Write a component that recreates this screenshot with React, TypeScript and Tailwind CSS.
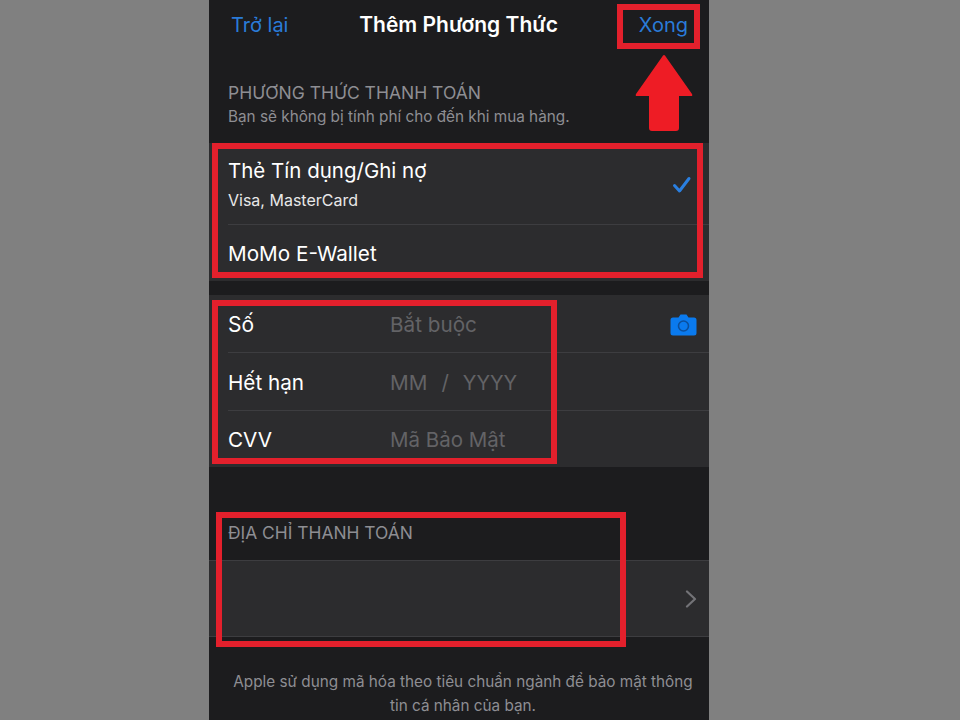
export default function App() {
  return (
    <main className="h-[720px] overflow-hidden bg-[#808080] pl-[209px] font-['Inter','Noto_Sans',sans-serif]">
      <div className="relative h-full w-[500px] bg-[#1c1c1e] flex flex-col">
        {/* Nav bar */}
        <header className="h-[50px] shrink-0 flex items-center justify-between pl-[22px] pr-[21px]">
          <span className="text-[20px] text-[#2a7bd8]">Trở lại</span>
          <h1 className="mr-[10px] text-[21px] font-semibold text-white">Thêm Phương Thức</h1>
          <span className="text-[20px] text-[#2a7bd8]">Xong</span>
        </header>

        {/* Section header */}
        <div className="h-[93px] shrink-0 pl-[19px] pt-[32px]">
          <div className="text-[17.5px] leading-[22px] text-[#8e8e93]">PHƯƠNG THỨC THANH TOÁN</div>
          <div className="text-[15.3px] leading-[20px] mt-[3px] text-[#8e8e93]">Bạn sẽ không bị tính phí cho đến khi mua hàng.</div>
        </div>

        {/* Payment type */}
        <section className="shrink-0 bg-[#2c2c2e] pl-[19px]">
          <div className="h-[82px] flex items-center justify-between pr-[17px] border-b border-[#3d3d40] pt-[1px]">
            <div>
              <div className="text-[20.5px] leading-[30px] text-white">Thẻ Tín dụng/Ghi nợ</div>
              <div className="text-[16px] leading-[24px] mt-[2px] text-[#e8e8e8]">Visa, MasterCard</div>
            </div>
            <svg width="20" height="18" viewBox="0 0 20 18" fill="none" className="mt-[1px]">
              <path d="M2.5 9.5 L7.5 15 L17 2.5" stroke="#2a7fe0" strokeWidth="3" strokeLinecap="round" strokeLinejoin="round" />
            </svg>
          </div>
          <div className="h-[56px] pt-[2px] flex items-center text-[20.7px] text-white">MoMo E-Wallet</div>
        </section>

        <div className="h-[14px] shrink-0" />

        {/* Card fields */}
        <section className="shrink-0 bg-[#2c2c2e] pl-[19px]">
          <div className="h-[58px] pt-[2px] flex items-center border-b border-[#3d3d40] pr-[12px]">
            <span className="w-[162px] text-[21px] text-white">Số</span>
            <span className="flex-1 text-[20.7px] text-[#636366]">Bắt buộc</span>
            <svg width="27" height="22" viewBox="0 0 27 22">
              <path d="M3 3.5h5.5L10.5 .5h6l2 3H24a2.5 2.5 0 0 1 2.5 2.5v13a2.5 2.5 0 0 1-2.5 2.5H3A2.5 2.5 0 0 1 .5 19V6A2.5 2.5 0 0 1 3 3.5Z" fill="#0a7aee" />
              <circle cx="13.5" cy="12" r="5" fill="none" stroke="#0b4f9c" strokeWidth="1.6" />
            </svg>
          </div>
          <div className="h-[58px] pt-[2px] flex items-center border-b border-[#3d3d40]">
            <span className="w-[162px] text-[20.7px] text-white">Hết hạn</span>
            <span className="text-[20.7px] text-[#636366]">MM</span>
            <span className="ml-[14px] text-[20.7px] text-[#636366]">/</span>
            <span className="ml-[14px] text-[20px] text-[#636366]">YYYY</span>
          </div>
          <div className="h-[56px] pt-[2px] flex items-center">
            <span className="w-[162px] text-[20.7px] text-white">CVV</span>
            <span className="text-[20.5px] text-[#636366]">Mã Bảo Mật</span>
          </div>
        </section>

        {/* Billing address */}
        <div className="h-[93px] shrink-0 pl-[19px] pt-[54px] text-[17.4px] leading-[24px] text-[#8e8e93]">ĐỊA CHỈ THANH TOÁN</div>
        <section className="h-[77px] shrink-0 bg-[#2c2c2e] border-y border-[#3d3d40] flex items-center justify-end pr-[12px]">
          <svg width="12" height="18" viewBox="0 0 12 18" fill="none">
            <path d="M2 1.5 L10 9 L2 16.5" stroke="#737377" strokeWidth="2.2" strokeLinecap="round" strokeLinejoin="round" />
          </svg>
        </section>

        <p className="mt-[33px] pl-[23px] pr-[15px] text-center text-[15.3px] leading-[24px] text-[#8e8e93]">
          Apple sử dụng mã hóa theo tiêu chuẩn ngành để bảo mật thông tin cá nhân của bạn.
        </p>

        {/* Red annotations */}
        <div className="absolute left-[408px] top-[4px] w-[83px] h-[45px] border-[6px] border-[#e3202c]" />
        <svg className="absolute left-[425px] top-[54px]" width="60" height="78" viewBox="0 0 60 78">
          <path d="M30 1 Q31 1 32 3 L58 40 Q59 42 57 42 L45 42 L45 74 Q45 77 42 77 L18 77 Q15 77 15 74 L15 42 L3 42 Q1 42 2 40 L28 3 Q29 1 30 1 Z" fill="#ee1c25" />
        </svg>
        <div className="absolute left-[3px] top-[143px] w-[491px] h-[135px] border-[6px] border-[#e3202c]" />
        <div className="absolute left-[3px] top-[300px] w-[345px] h-[164px] border-[6px] border-[#e3202c]" />
        <div className="absolute left-[7px] top-[512px] w-[410px] h-[135px] border-[6px] border-[#e3202c]" />
      </div>
    </main>
  );
}
